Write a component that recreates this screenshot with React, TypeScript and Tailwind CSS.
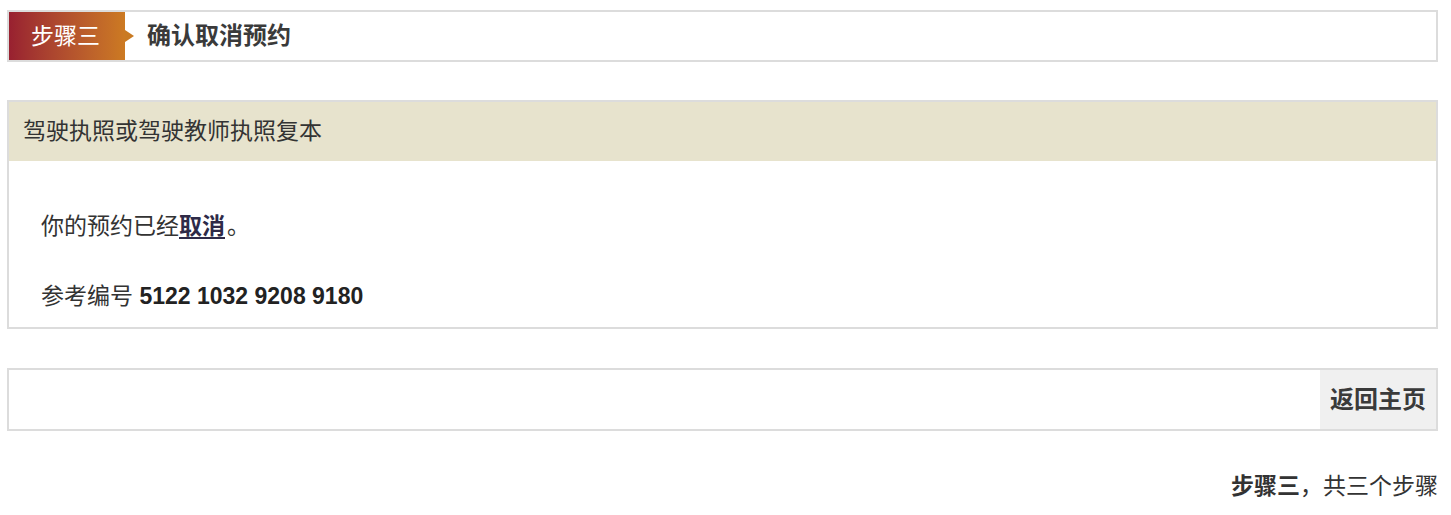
import React from "react";

const font = { fontFamily: '"Liberation Sans", "Noto Sans CJK SC", sans-serif' };

export default function App() {
  return (
    <div className="bg-white w-[1451px] h-[515px] overflow-hidden text-[#333]" style={font}>
      <div className="ml-[7px] w-[1431px] pt-[10px]">
        {/* Step header */}
        <div className="flex items-stretch h-[52px] border-2 border-[#dcdcdc] bg-white">
          <div className="relative flex items-center w-[116px] pl-[22px] text-white text-[23px] leading-none bg-gradient-to-r from-[#982030] to-[#cc7a22]">
            步骤三
            <div className="absolute right-[-9px] top-[18px] w-0 h-0 border-t-[6px] border-b-[6px] border-l-[9px] border-t-transparent border-b-transparent border-l-[#c97a22]" />
          </div>
          <div className="flex items-center pl-[22px] text-[24px] font-bold text-[#3a3a3a] leading-none">
            确认取消预约
          </div>
        </div>

        {/* Main panel */}
        <div className="mt-[38px] border-2 border-[#dcdcdc]">
          <div className="h-[59px] bg-[#e7e3cd] flex items-center pl-[14px] text-[23px] leading-none text-[#333]">
            驾驶执照或驾驶教师执照复本
          </div>
          <div className="pl-[32px] pt-[50px] pb-[16px] text-[23px]">
            <div className="h-[30px] leading-[30px]">
              你的预约已经
              <span className="font-bold underline underline-offset-[3px] text-[#2e2a48]">取消</span>
              <span className="ml-[2px]">。</span>
            </div>
            <div className="h-[30px] leading-[30px] mt-[40px]">
              参考编号 <span className="font-bold text-[#222]">5122 1032 9208 9180</span>
            </div>
          </div>
        </div>

        {/* Footer panel */}
        <div className="mt-[39px] h-[63px] border-2 border-[#dcdcdc] flex justify-end">
          <button className="w-[116px] h-full bg-[#f0f0f0] text-[24px] font-bold text-[#3a3a3a] leading-none">
            返回主页
          </button>
        </div>

        {/* Step indicator */}
        <div className="mt-[40px] h-[30px] leading-[30px] text-right text-[23px] text-[#333]">
          <span className="font-bold">步骤三</span>，共三个步骤
        </div>
      </div>
    </div>
  );
}
